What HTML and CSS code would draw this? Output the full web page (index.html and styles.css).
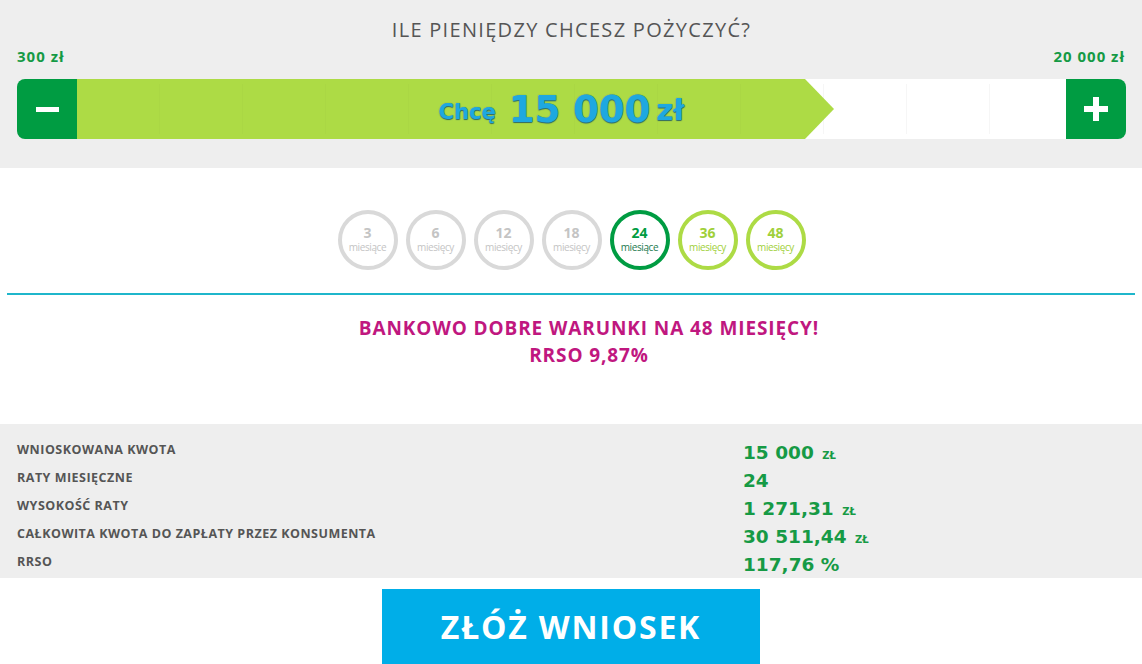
FILE: index.html
```html
<!DOCTYPE html>
<html lang="pl">
<head>
<meta charset="utf-8">
<title>Kalkulator pożyczki</title>
<link rel="stylesheet" href="styles.css">
</head>
<body>
<section class="picker">
  <h1 class="picker-title">ILE PIENIĘDZY CHCESZ POŻYCZYĆ?</h1>
  <div class="limits">
    <span>300 zł</span>
    <span>20 000 zł</span>
  </div>
  <div class="slider">
    <button class="step step-minus" aria-label="Mniej"><span class="minus"></span></button>
    <div class="track">
      <div class="fill" style="width: 728px"></div>
      <div class="amount"><span class="amount-want">Chcę</span><span class="amount-value">15 000</span><span class="amount-unit">zł</span></div>
    </div>
    <button class="step step-plus" aria-label="Więcej"><span class="plus"></span></button>
  </div>
</section>

<section class="terms">
  <div class="periods">
    <div class="period"><b>3</b><span>miesiące</span></div>
    <div class="period"><b>6</b><span>miesięcy</span></div>
    <div class="period"><b>12</b><span>miesięcy</span></div>
    <div class="period"><b>18</b><span>miesięcy</span></div>
    <div class="period period-active"><b>24</b><span>miesiące</span></div>
    <div class="period period-offer"><b>36</b><span>miesięcy</span></div>
    <div class="period period-offer"><b>48</b><span>miesięcy</span></div>
  </div>
  <hr class="divider">
  <p class="promo">BANKOWO DOBRE WARUNKI NA 48 MIESIĘCY!<br>RRSO 9,87%</p>
</section>

<section class="summary">
  <div class="summary-label">WNIOSKOWANA KWOTA</div>
  <div class="summary-value">15 000 <small>ZŁ</small></div>
  <div class="summary-label">RATY MIESIĘCZNE</div>
  <div class="summary-value">24</div>
  <div class="summary-label">WYSOKOŚĆ RATY</div>
  <div class="summary-value">1 271,31 <small>ZŁ</small></div>
  <div class="summary-label">CAŁKOWITA KWOTA DO ZAPŁATY PRZEZ KONSUMENTA</div>
  <div class="summary-value">30 511,44 <small>ZŁ</small></div>
  <div class="summary-label">RRSO</div>
  <div class="summary-value">117,76 %</div>
</section>

<div class="actions">
  <button class="apply">ZŁÓŻ WNIOSEK</button>
</div>
</body>
</html>
```

FILE: styles.css
```css
* { box-sizing: border-box; }

html, body {
  margin: 0;
  background: #ffffff;
  font-family: "Open Sans", "Liberation Sans", sans-serif;
  color: #555555;
}

body { width: 1142px; height: 664px; overflow: hidden; }

/* amount picker */
.picker {
  background: #eeeeee;
  height: 168px;
  padding: 16px 16px 0 17px;
}

.picker-title {
  margin: 0;
  text-align: center;
  font-size: 20px;
  font-weight: 400;
  letter-spacing: 1.3px;
  line-height: 28px;
  color: #555555;
}

.limits {
  display: flex;
  justify-content: space-between;
  font-size: 15px;
  font-weight: 700;
  letter-spacing: 1px;
  color: #159a45;
  line-height: 20px;
  margin-top: 2px;
  padding-right: 1px;
}

.slider {
  display: flex;
  height: 60px;
  margin-top: 13px;
}

.step {
  width: 60px;
  border: 0;
  padding: 0;
  background: #009c42;
  display: flex;
  align-items: center;
  justify-content: center;
}

.step-minus { border-radius: 8px 0 0 8px; }
.step-plus { border-radius: 0 8px 8px 0; }

.minus {
  width: 23px;
  height: 5px;
  background: #ffffff;
}

.plus {
  width: 24px;
  height: 24px;
  background:
    linear-gradient(#ffffff, #ffffff) center / 24px 6px no-repeat,
    linear-gradient(#ffffff, #ffffff) center / 6px 24px no-repeat;
}

.track {
  flex: 1;
  position: relative;
  background:
    repeating-linear-gradient(90deg, transparent 0 82px, rgba(0, 0, 0, 0.035) 82px 83px) 0 5px / 100% 50px no-repeat,
    #ffffff;
}

.fill {
  position: absolute;
  left: 0;
  top: 0;
  bottom: 0;
  background:
    repeating-linear-gradient(90deg, transparent 0 82px, rgba(0, 0, 0, 0.02) 82px 83px) 0 5px / 100% 50px no-repeat,
    #addb45;
}

.fill::after {
  content: "";
  position: absolute;
  left: 100%;
  top: 0;
  border-top: 30px solid transparent;
  border-bottom: 30px solid transparent;
  border-left: 29px solid #addb45;
}

.amount {
  position: absolute;
  inset: 0;
  display: flex;
  align-items: center;
  justify-content: center;
  padding-right: 20px;
  color: #1ea8e0;
  font-family: "DejaVu Sans", "Open Sans", sans-serif;
  font-weight: 700;
  text-shadow: 0 1px 1px rgba(10, 70, 110, 0.75), 0 0 1px rgba(10, 70, 110, 0.6);
}

.amount-want { font-size: 21px; margin: 6px 13px 0 0; }
.amount-value { font-size: 37px; margin-right: 6px; }
.amount-unit { font-size: 29px; margin-top: 2px; }

/* period choice */
.terms {
  height: 256px;
  padding-top: 42px;
}

.periods {
  display: flex;
  justify-content: center;
  gap: 8px;
  padding-left: 1px;
}

.period {
  width: 60px;
  height: 60px;
  border-radius: 50%;
  border: 4px solid #d9d9d9;
  color: #c4c4c4;
  display: flex;
  flex-direction: column;
  align-items: center;
  justify-content: center;
  padding-bottom: 2px;
}

.period b {
  font-size: 14px;
  line-height: 16px;
}

.period span {
  font-size: 10px;
  line-height: 12px;
  letter-spacing: -0.4px;
}

.period-active { border-color: #009c42; color: #009c42; }
.period-active span { color: #1c7a50; }
.period-offer { border-color: #addb45; color: #9fd03a; }

.divider {
  margin: 23px 7px 0 7px;
  border: 0;
  height: 2px;
  background: #1fb6cb;
}

.promo {
  margin: 20px 0 0;
  padding-left: 36px;
  text-align: center;
  font-size: 19px;
  font-weight: 700;
  letter-spacing: 0.9px;
  line-height: 27px;
  color: #c0177f;
}

/* loan summary */
.summary {
  background: #eeeeee;
  height: 154px;
  padding: 11px 0 0 17px;
  display: grid;
  grid-template-columns: 726px 1fr;
  grid-auto-rows: 28px;
  align-items: center;
}

.summary-label {
  font-size: 12.5px;
  font-weight: 700;
  letter-spacing: 0.5px;
  color: #555555;
}

.summary-value {
  font-family: "DejaVu Sans", "Open Sans", sans-serif;
  font-size: 18.5px;
  font-weight: 700;
  color: #169a45;
  padding-top: 6px;
}

.summary-value small {
  font-size: 10px;
  font-weight: 700;
  margin-left: 2px;
}

/* call to action */
.actions {
  display: flex;
  justify-content: center;
  padding-top: 11px;
}

.apply {
  width: 378px;
  height: 76px;
  border: 0;
  background: #00aee8;
  color: #ffffff;
  font-family: "Open Sans", "Liberation Sans", sans-serif;
  font-size: 32px;
  font-weight: 700;
  letter-spacing: 1.8px;
  padding-bottom: 3px;
}
```
